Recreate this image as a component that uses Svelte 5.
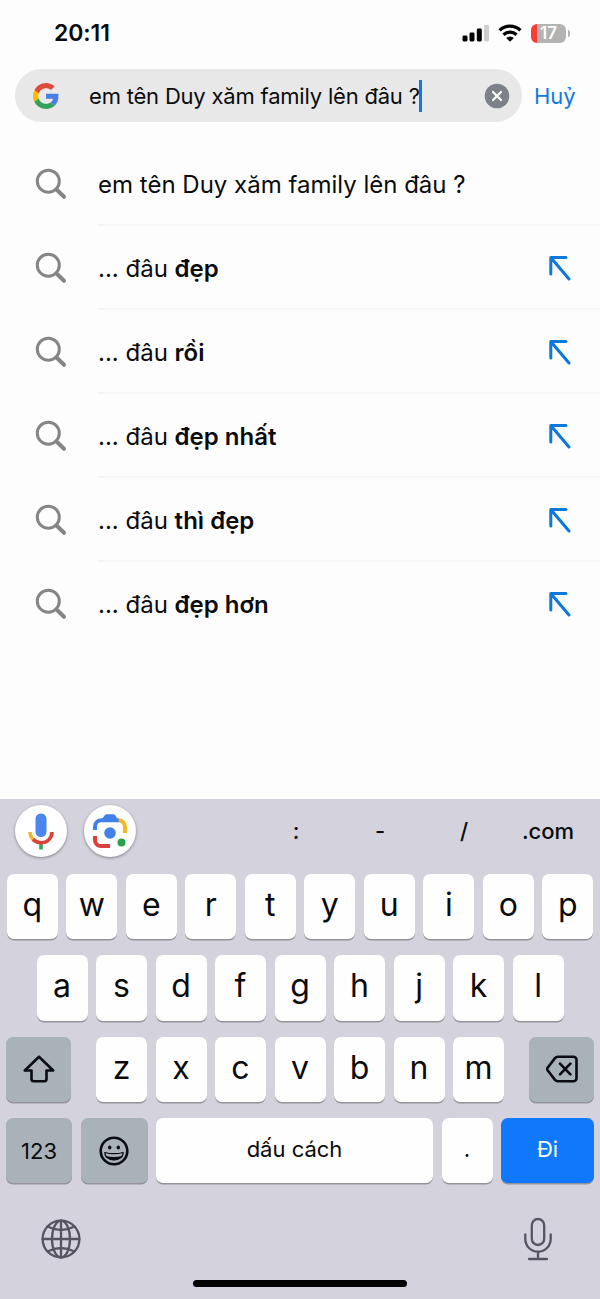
<script lang="ts">
  const query = "em tên Duy xăm family lên đâu ?";

  const suggestions = ["đẹp", "rồi", "đẹp nhất", "thì đẹp", "đẹp hơn"];

  const topRow = [..."qwertyuiop"];
  const homeRow = [..."asdfghjkl"];
  const bottomRow = [..."zxcvbnm"];
  const shortcuts = [":", "-", "/", ".com"];
</script>

{#snippet searchIcon()}
  <svg class="search-icon" width="32" height="32" viewBox="0 0 32 32">
    <circle cx="13.3" cy="13.2" r="11" />
    <path d="M21.3 21.3 29 28.8" stroke-width="4" />
  </svg>
{/snippet}

<div class="screen">
  <header class="status-bar">
    <div class="time">20:11</div>
    <div class="indicators">
      <svg width="28" height="18" viewBox="0 0 28 18">
        <rect x="0.5" y="11.5" width="5" height="6" rx="1.4" />
        <rect x="7.5" y="8.5" width="5" height="9" rx="1.4" />
        <rect x="14.8" y="4.5" width="5" height="13" rx="1.4" />
        <rect x="22" y="1" width="5" height="16.5" rx="1.4" fill="#cfcfcf" />
      </svg>
      <svg width="24" height="18" viewBox="0 0 24 18">
        <g fill="none" stroke="#000" stroke-width="3.3">
          <path d="M1.6 6.4a15 15 0 0 1 20.8 0" />
          <path d="M5.5 10.7a9.4 9.4 0 0 1 13 0" />
        </g>
        <path d="M12 17.8 8.2 14a5.5 5.5 0 0 1 7.6 0Z" />
      </svg>
      <div class="battery"><span>17</span></div>
    </div>
  </header>

  <div class="search-row">
    <div class="search-box">
      <svg class="google" width="26" height="26" viewBox="0 0 48 48">
        <path fill="#dd4b3e" d="M24 9.5c3.5 0 6.7 1.2 9.2 3.6l6.9-6.9C35.9 2.4 30.5 0 24 0 14.6 0 6.5 5.4 2.6 13.2l8 6.2C12.4 13.7 17.7 9.5 24 9.5z" />
        <path fill="#4a80e4" d="M47 24.6c0-1.6-.2-3.1-.4-4.6H24v9h12.9c-.6 3-2.2 5.5-4.7 7.2l7.7 6C44.4 38 47 31.800 47 24.600z" />
        <path fill="#fbbc05" d="M10.500 28.600A14.500 14.500 0 0 1 10.500 19.400l-8-6.200A24 24 0 0 0 2.600 34.800z" />
        <path fill="#34a05a" d="M24 48c6.500 0 11.900-2.100 15.900-5.800l-7.700-6c-2.200 1.500-4.900 2.300-8.200 2.300-6.300 0-11.600-4.200-13.500-9.900l-8 6.200C6.500 42.600 14.600 48 24 48z" />
      </svg>
      <span class="query">{query}</span>
      <span class="caret"></span>
      <svg class="clear" width="26" height="26" viewBox="0 0 26 26">
        <circle cx="13" cy="13" r="12.300" fill="#7c8288" />
        <path d="m9 9 8 8m0-8-8 8" stroke="#fff" stroke-width="2.200" stroke-linecap="round" />
      </svg>
    </div>
    <div class="cancel">Huỷ</div>
  </div>

  <ul class="suggestions">
    <li>
      {@render searchIcon()}
      <div class="entry"><span class="full">{query}</span></div>
    </li>
    {#each suggestions as ending (ending)}
      <li>
        {@render searchIcon()}
        <div class="entry">
          <span>... đâu <b>{ending}</b></span>
          <svg class="fill-arrow" width="24" height="26" viewBox="0 0 24 26">
            <path d="M18 2.500H2.800V19M3.200 3 21 24" />
          </svg>
        </div>
      </li>
    {/each}
  </ul>

  <div class="keyboard">
    <div class="toolbar">
      <div class="round">
        <svg width="52" height="52" viewBox="0 0 52 52" fill="none">
          <rect x="20.500" y="8.500" width="11" height="23.500" rx="5.300" fill="#4a86ee" />
          <path d="M26 37v7.500" stroke="#37a455" stroke-width="3.600" />
          <path d="M15 27a11 11 0 0 0 4 8.200" stroke="#f2b52f" stroke-width="3.600" />
          <path d="M18 34.200C22.500 38.800 29.500 38.800 33.500 35A11 11 0 0 0 37 27" stroke="#dc4038" stroke-width="3.600" />
        </svg>
      </div>
      <div class="round">
        <svg width="52" height="52" viewBox="0 0 52 52" fill="none">
          <g stroke-width="4">
            <path d="M11 25v-3.500a6.500 6.500 0 0 1 6.500-6.300H35" stroke="#4280e8" />
            <path d="M34.500 15.200a6.500 6.500 0 0 1 6.500 6.500V28" stroke="#f4b921" />
            <path d="M11 31v4a6 6 0 0 0 6 6h9" stroke="#db403c" />
          </g>
          <path d="m18 14 2.500-3.500a3 3 0 0 1 2.500-1.200h6a3 3 0 0 1 2.500 1.200L35 17H18Z" fill="#4280e8" />
          <circle cx="26" cy="28" r="5.800" fill="#4280e8" />
          <circle cx="37.500" cy="37.500" r="4" fill="#2ca04b" />
        </svg>
      </div>
      <div class="shortcuts">
        {#each shortcuts as item (item)}
          <span>{item}</span>
        {/each}
      </div>
    </div>

    <div class="rows">
      <div class="row">
        {#each topRow as letter (letter)}
          <div class="key">{letter}</div>
        {/each}
      </div>
      <div class="row">
        {#each homeRow as letter (letter)}
          <div class="key">{letter}</div>
        {/each}
      </div>
      <div class="row spread">
        <div class="key dark shift">
          <svg width="32" height="28" viewBox="0 0 32 28">
            <path d="M16 1.800 1.800 15.500h6.700V24a2.200 2.200 0 0 0 2.200 2.200h10.600a2.200 2.200 0 0 0 2.200-2.200v-8.500h6.700Z" />
          </svg>
        </div>
        <div class="row">
          {#each bottomRow as letter (letter)}
            <div class="key">{letter}</div>
          {/each}
        </div>
        <div class="key dark shift">
          <svg width="32" height="28" viewBox="0 0 32 28">
            <path d="M12 1.800h15.500a3 3 0 0 1 3 3v18.400a3 3 0 0 1-3 3H12a4 4 0 0 1-3-1.300L1.800 15.500a2 2 0 0 1 0-3L9 3.100a4 4 0 0 1 3-1.300ZM14 8.600l10.400 10.800m0-10.800L14 19.400" />
          </svg>
        </div>
      </div>
      <div class="row last">
        <div class="key dark label">123</div>
        <div class="key dark">
          <svg class="emoji" width="30" height="30" viewBox="0 0 30 30">
            <circle cx="15" cy="15" r="13.300" />
            <path d="M5.800 16.500q9.200 2.400 18.400 0c0 10-18.400 10-18.400 0Z" stroke-width="1.200" />
            <path d="M7 20q8 2 16 0c-3 5.500-13 5.500-16 0Z" fill="#0b0b12" stroke="none" />
            <g fill="#0b0b12" stroke="none">
              <ellipse cx="10.700" cy="11.500" rx="1.700" ry="2.100" />
              <ellipse cx="19.300" cy="11.500" rx="1.700" ry="2.100" />
            </g>
          </svg>
        </div>
        <div class="key label">dấu cách</div>
        <div class="key label">.</div>
        <div class="key go label">Đi</div>
      </div>
    </div>

    <div class="footer">
      <svg width="40" height="40" viewBox="0 0 40 40">
        <circle cx="20" cy="20" r="18.400" />
        <ellipse cx="20" cy="20" rx="9" ry="18.400" />
        <path d="M20 1.600v36.800M1.600 20h36.800M6.500 7.500q13.500 7 27 0M6.500 32.500q13.500-7 27 0" />
      </svg>
      <svg width="28" height="44" viewBox="0 0 28 44">
        <rect x="7.800" y="2" width="12.400" height="26" rx="6.200" />
        <path d="M1.300 17.500V22a12.700 12.700 0 0 0 25.400 0v-4.500M14 34.700V42M5 42h18" />
      </svg>
    </div>
    <div class="home-bar"></div>
  </div>
</div>

<style>
  :global(body) {
    margin: 0;
    background: #fdfdfd;
  }

  .screen {
    display: flex;
    flex-direction: column;
    width: 600px;
    height: 1299px;
    overflow: hidden;
    background: #fdfdfd;
    color: #0b0b0d;
    font-family: Inter, "Noto Sans", sans-serif;
  }

  svg {
    display: block;
    flex: none;
  }

  .status-bar {
    box-sizing: border-box;
    display: flex;
    justify-content: space-between;
    height: 69px;
    padding: 19px 31px 0 54px;
  }

  .time {
    font-size: 23px;
    line-height: 28px;
    font-weight: 600;
    letter-spacing: -0.1px;
  }

  .indicators {
    display: flex;
    gap: 8px;
    height: 28px;
    align-items: center;
  }

  .battery {
    position: relative;
    width: 35px;
    height: 19px;
    border-radius: 6px;
    background: linear-gradient(90deg, #fb3c32 6px, #b3b3b3 6px);
    color: #fff;
    font-size: 17px;
    line-height: 19px;
    font-weight: 600;
    text-align: center;
    margin: 0 3px 0 1px;
  }

  .battery::after {
    content: "";
    position: absolute;
    right: -4px;
    top: 6px;
    width: 2px;
    height: 7px;
    border-radius: 0 3px 3px 0;
    background: #b3b3b3;
  }

  .search-row {
    display: flex;
    align-items: center;
    padding-left: 15px;
    height: 53px;
  }

  .search-box {
    box-sizing: border-box;
    display: flex;
    align-items: center;
    width: 507px;
    height: 53px;
    padding: 0 12px 0 18px;
    border-radius: 27px;
    background: #e8e8e8;
  }

  .query {
    margin-left: 30px;
    font-size: 22px;
    letter-spacing: -0.2px;
    white-space: nowrap;
  }

  .caret {
    width: 3px;
    height: 32px;
    margin-left: -1px;
    background: #1477e6;
  }

  .clear {
    margin-left: auto;
  }

  .cancel {
    margin-left: 12px;
    color: #0f7be0;
    font-size: 22px;
  }

  .suggestions {
    flex: 1;
    margin: 0;
    padding: 20px 0 0;
    list-style: none;
  }

  .suggestions li {
    display: flex;
    align-items: center;
    height: 84px;
    padding-left: 35px;
  }

  .search-icon {
    fill: none;
    stroke: #858585;
    stroke-width: 3;
    stroke-linecap: round;
  }

  .entry {
    box-sizing: border-box;
    display: flex;
    flex: 1;
    align-items: center;
    justify-content: space-between;
    height: 84px;
    margin-left: 31px;
    padding: 2px 28px 0 0;
    border-bottom: 2px solid #f5f5f5;
    font-size: 24px;
    white-space: nowrap;
  }

  .suggestions li:last-child .entry {
    border-color: transparent;
  }

  .entry b {
    font-weight: 600;
  }

  .fill-arrow {
    fill: none;
    stroke: #0c78dc;
    stroke-width: 3;
    stroke-linecap: round;
    stroke-linejoin: round;
  }

  .keyboard {
    display: flex;
    flex-direction: column;
    height: 500px;
    background: #d4d2dc;
  }

  .toolbar {
    display: flex;
    align-items: center;
    gap: 17px;
    height: 64px;
    padding-left: 15px;
  }

  .round {
    width: 52px;
    height: 52px;
    border-radius: 50%;
    background: #fff;
    box-shadow: 0 1px 3px rgb(0 0 0 / 0.4);
  }

  .shortcuts {
    display: grid;
    grid-template-columns: repeat(4, 84px);
    margin-left: auto;
    margin-right: 10px;
    font-size: 22px;
    font-weight: 500;
    text-align: center;
  }

  .rows {
    display: grid;
    gap: 16px;
    margin-top: 11px;
    padding: 0 6px;
  }

  .row {
    display: flex;
    justify-content: center;
    gap: 8.5px;
  }

  .spread {
    justify-content: space-between;
  }

  .last {
    display: grid;
    grid-template-columns: 66px 67px 277px 51px 93px;
    gap: 8.5px;
    justify-content: space-between;
  }

  .key {
    box-sizing: border-box;
    display: flex;
    align-items: center;
    justify-content: center;
    width: 51px;
    height: 65.300px;
    padding-bottom: 4px;
    border-radius: 7px;
    background: #fefefe;
    box-shadow: 0 1.500px 0 #94939a;
    font-size: 32px;
  }

  .last .key {
    width: auto;
  }

  .dark {
    padding: 0;
    background: #a9b2b9;
  }

  .key.shift {
    width: 65px;
  }

  .key svg {
    fill: none;
    stroke: #0b0b12;
    stroke-width: 2.600;
    stroke-linejoin: round;
    stroke-linecap: round;
  }

  .label {
    font-size: 22px;
  }

  .go {
    background: #1078fb;
    color: #fff;
  }

  .footer {
    display: flex;
    align-items: center;
    justify-content: space-between;
    margin-top: 34px;
    padding: 0 48px 0 41px;
  }

  .footer svg {
    fill: none;
    stroke: #555460;
    stroke-width: 2.300;
    stroke-linecap: round;
  }

  .home-bar {
    width: 214px;
    height: 7px;
    margin: auto auto 12px;
    border-radius: 4px;
    background: #000;
  }
</style>
